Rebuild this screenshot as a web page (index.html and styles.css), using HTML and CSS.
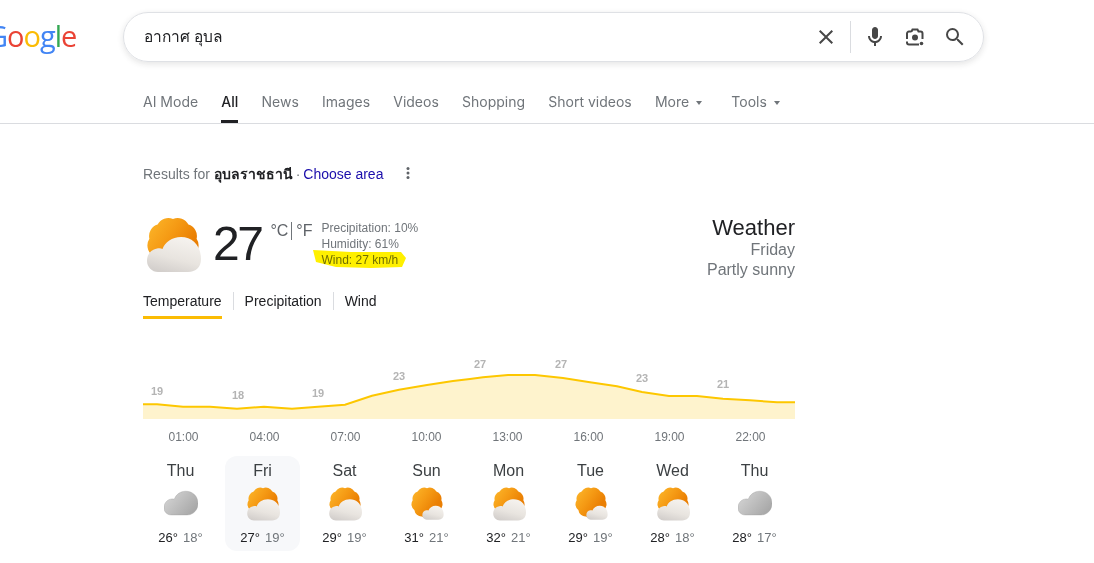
FILE: index.html
```html
<!DOCTYPE html>
<html lang="th">
<head>
    <meta charset="UTF-8">
    <meta name="viewport" content="width=device-width, initial-scale=1.0">
    <title>อากาศ อุบล - Google Search</title>
    <link rel="stylesheet" href="styles.css">
</head>
<body>
    <svg class="defs" width="0" height="0">
        <defs>
            <linearGradient id="sunFill" x1="0" y1="0" x2="1" y2="0.7">
                <stop offset="0" stop-color="#fdb92c"/>
                <stop offset="0.45" stop-color="#f59a14"/>
                <stop offset="0.8" stop-color="#ea7f03"/>
            </linearGradient>
            <linearGradient id="cloudFill" x1="0.7" y1="0" x2="0.3" y2="1">
                <stop offset="0" stop-color="#f6f3ef"/>
                <stop offset="0.6" stop-color="#e8e4df"/>
                <stop offset="1" stop-color="#d3cfcc"/>
            </linearGradient>
            <linearGradient id="greyFill" x1="0" y1="0" x2="1" y2="0.6">
                <stop offset="0" stop-color="#d9d9d9"/>
                <stop offset="1" stop-color="#a9a9a9"/>
            </linearGradient>
            <path id="sunShape" fill="url(#sunFill)" d="M28 2A12 12 0 0 1 43.400 7.600A12 12 0 0 1 51.600 21.800A12 12 0 0 1 48.800 38A12 12 0 0 1 36.200 48.600A12 12 0 0 1 19.800 48.600A12 12 0 0 1 7.200 38A12 12 0 0 1 4.400 21.800A12 12 0 0 1 12.600 7.600A12 12 0 0 1 28 2Z"/>
            <path id="cloudShape" d="M13 55H43C51 55 56 50 56 42C56 28 47 20 36 20C27 20 20 25 17.500 32C16 31 14 31 12 31.500C6 32.500 2 37 2 44C2 50 7 55 13 55Z"/>
            <symbol id="partlySunny" viewBox="0 0 56 56">
                <use href="#sunShape"/>
                <use href="#cloudShape" fill="url(#cloudFill)"/>
            </symbol>
            <symbol id="mostlySunny" viewBox="0 0 56 56">
                <use href="#sunShape"/>
                <use href="#cloudShape" fill="url(#cloudFill)" transform="translate(19 18) scale(0.65)"/>
            </symbol>
            <symbol id="cloudy" viewBox="0 0 56 56">
                <path fill="url(#greyFill)" stroke="#9c9c9c" stroke-width="0.6" d="M12 46H38C48 46 56 38 56 27C56 15 47 7 36 7C27 7 20 12 17 20C15 19.500 13 19.500 11 20C5 21 0 27 0 34C0 41 5 46 12 46Z"/>
            </symbol>
        </defs>
    </svg>

    <header class="header">
        <div class="search-row">
            <div class="logo">
                <span class="blue">G</span><span class="red">o</span><span class="yellow">o</span><span class="blue">g</span><span class="green">l</span><span class="red">e</span>
            </div>
            <div class="search-box">
                <span class="query">อากาศ อุบล</span>
                <svg class="icon clear-icon" viewBox="0 0 24 24"><path d="M19 6.410L17.590 5 12 10.590 6.410 5 5 6.410 10.590 12 5 17.590 6.410 19 12 13.410 17.590 19 19 17.590 13.410 12z"/></svg>
                <span class="divider"></span>
                <svg class="icon" viewBox="0 0 24 24"><path d="M12 14c1.660 0 3-1.340 3-3V5c0-1.660-1.340-3-3-3S9 3.340 9 5v6c0 1.660 1.340 3 3 3z"/><path d="M17 11c0 2.760-2.240 5-5 5s-5-2.240-5-5H5c0 3.530 2.610 6.430 6 6.920V21h2v-3.080c3.390-.49 6-3.390 6-6.920h-2z"/></svg>
                <svg class="icon" viewBox="0 0 24 24"><path class="lens-line" d="M8.500 6.500l1-2h5l1 2h2a2 2 0 0 1 2 2V14M4 14V8.500a2 2 0 0 1 2-2h2.500M4 16.500v1a2 2 0 0 0 2 2h10"/><circle cx="12" cy="12.500" r="3"/><circle cx="18.500" cy="18.500" r="1.800"/></svg>
                <svg class="icon" viewBox="0 0 24 24"><path d="M15.500 14h-.79l-.28-.27A6.471 6.471 0 0 0 16 9.500 6.500 6.500 0 1 0 9.500 16c1.610 0 3.090-.59 4.230-1.570l.27.28v.79l5 4.990L20.490 19l-4.990-5zm-6 0C7.010 14 5 11.990 5 9.500S7.010 5 9.500 5 14 7.010 14 9.500 11.990 14 9.500 14z"/></svg>
            </div>
        </div>
        <nav class="tabs">
            <a class="tab">AI Mode</a>
            <a class="tab active">All</a>
            <a class="tab">News</a>
            <a class="tab">Images</a>
            <a class="tab">Videos</a>
            <a class="tab">Shopping</a>
            <a class="tab">Short videos</a>
            <a class="tab">More<i class="caret"></i></a>
            <a class="tab tools">Tools<i class="caret"></i></a>
        </nav>
    </header>

    <main class="results">
        <div class="location">
            <span>Results for <b>อุบลราชธานี</b> <span class="dot">·</span> <a class="link">Choose area</a></span>
            <svg class="kebab" viewBox="0 0 4 12" width="4" height="12"><circle cx="2" cy="1.500" r="1.500"/><circle cx="2" cy="6" r="1.500"/><circle cx="2" cy="10.500" r="1.500"/></svg>
        </div>

        <section class="weather">
            <div class="now">
                <svg class="now-icon"><use href="#partlySunny"/></svg>
                <span class="temp">27</span>
                <span class="units">°C<i class="unit-sep"></i>°F</span>
                <div class="details">
                    <div>Precipitation: 10%</div>
                    <div>Humidity: 61%</div>
                    <div class="wind">Wind: 27 km/h
                        <svg class="marker" viewBox="0 0 96 19" width="96" height="19"><path d="M2 0L40 2 90 2 95 8 91 17 60 18 25 17 5 12Z"/></svg>
                    </div>
                </div>
            </div>
            <div class="summary">
                <div class="summary-title">Weather</div>
                <div>Friday</div>
                <div>Partly sunny</div>
            </div>
        </section>

        <div class="chart-tabs">
            <a class="chart-tab selected">Temperature</a>
            <a class="chart-tab">Precipitation</a>
            <a class="chart-tab">Wind</a>
        </div>

        <svg class="chart" viewBox="0 0 652 85" width="652" height="85">
            <path class="chart-area" d="M0 59.300L14 59.300 40 61.700 67 61.700 94 63.700 121 61.700 149 63.700 175 61.700 202 59.700 229 50.700 256 44.700 284 40 310 36 327 34 340 32.300 365 30 392 30 420 33 447 37.300 474 41.300 499 47 526 51 554 51 580 53.700 607 55.300 634 57.300 652 57.300V74H0Z"/>
            <path class="chart-line" d="M0 59.300L14 59.300 40 61.700 67 61.700 94 63.700 121 61.700 149 63.700 175 61.700 202 59.700 229 50.700 256 44.700 284 40 310 36 327 34 340 32.300 365 30 392 30 420 33 447 37.300 474 41.300 499 47 526 51 554 51 580 53.700 607 55.300 634 57.300 652 57.300"/>
            <g class="chart-values">
                <text x="14" y="50">19</text>
                <text x="95" y="54">18</text>
                <text x="175" y="52">19</text>
                <text x="256" y="35">23</text>
                <text x="337" y="23">27</text>
                <text x="418" y="23">27</text>
                <text x="499" y="37">23</text>
                <text x="580" y="43">21</text>
            </g>
        </svg>

        <div class="hours">
            <span>01:00</span>
            <span>04:00</span>
            <span>07:00</span>
            <span>10:00</span>
            <span>13:00</span>
            <span>16:00</span>
            <span>19:00</span>
            <span>22:00</span>
        </div>

        <div class="days">
            <div class="day">
                <div class="day-name">Thu</div>
                <svg class="day-icon"><use href="#cloudy"/></svg>
                <div class="day-temp"><span class="high">26°</span><span class="low">18°</span></div>
            </div>
            <div class="day today">
                <div class="day-name">Fri</div>
                <svg class="day-icon"><use href="#partlySunny"/></svg>
                <div class="day-temp"><span class="high">27°</span><span class="low">19°</span></div>
            </div>
            <div class="day">
                <div class="day-name">Sat</div>
                <svg class="day-icon"><use href="#partlySunny"/></svg>
                <div class="day-temp"><span class="high">29°</span><span class="low">19°</span></div>
            </div>
            <div class="day">
                <div class="day-name">Sun</div>
                <svg class="day-icon"><use href="#mostlySunny"/></svg>
                <div class="day-temp"><span class="high">31°</span><span class="low">21°</span></div>
            </div>
            <div class="day">
                <div class="day-name">Mon</div>
                <svg class="day-icon"><use href="#partlySunny"/></svg>
                <div class="day-temp"><span class="high">32°</span><span class="low">21°</span></div>
            </div>
            <div class="day">
                <div class="day-name">Tue</div>
                <svg class="day-icon"><use href="#mostlySunny"/></svg>
                <div class="day-temp"><span class="high">29°</span><span class="low">19°</span></div>
            </div>
            <div class="day">
                <div class="day-name">Wed</div>
                <svg class="day-icon"><use href="#partlySunny"/></svg>
                <div class="day-temp"><span class="high">28°</span><span class="low">18°</span></div>
            </div>
            <div class="day">
                <div class="day-name">Thu</div>
                <svg class="day-icon"><use href="#cloudy"/></svg>
                <div class="day-temp"><span class="high">28°</span><span class="low">17°</span></div>
            </div>
        </div>
    </main>
</body>
</html>
```

FILE: styles.css
```css
html, body {
    margin: 0;
    height: 100%;
    overflow: hidden;
}
body {
    font-family: "Liberation Sans", "Noto Sans", sans-serif;
    background-color: white;
    color: #202124;
}
.defs {
    display: block;
    height: 0;
}
.header {
    height: 123px;
    border-bottom: 1px solid #dadce0;
}
.search-row {
    display: flex;
    padding-top: 12px;
}
.logo {
    width: 137px;
    margin-left: -13px;
    margin-right: -1px;
    box-sizing: border-box;
    padding-top: 4px;
    font-family: "Open Sans", sans-serif;
    font-size: 29px;
    font-weight: 500;
    line-height: 40px;
    letter-spacing: -1px;
}
.blue { color: #4285f4; }
.red { color: #ea4335; }
.yellow { color: #fbbc05; }
.green { color: #34a853; }
.search-box {
    display: flex;
    align-items: center;
    box-sizing: border-box;
    width: 861px;
    height: 50px;
    padding: 0 16px 0 20px;
    border: 1px solid #dfe1e5;
    border-radius: 25px;
    box-shadow: 0 2px 6px rgba(32,33,36,0.12);
}
.query {
    flex: 1;
    padding-bottom: 2px;
    font-size: 15.500px;
}
.icon {
    width: 24px;
    height: 24px;
    margin-left: 16px;
    fill: #474747;
}
.clear-icon {
    margin-left: 0;
}
.divider {
    width: 1px;
    height: 32px;
    margin-left: 12px;
    margin-right: -4px;
    background-color: #dadce0;
}
.lens-line {
    fill: none;
    stroke: #474747;
    stroke-width: 2;
}
.tabs {
    display: flex;
    gap: 23.200px;
    padding-left: 143px;
    margin-top: 18px;
    font-family: Inter, sans-serif;
    font-size: 14px;
}
.tab {
    height: 43px;
    box-sizing: border-box;
    padding-top: 13px;
    color: #70757a;
}
.tab.active {
    color: #202124;
    font-weight: 500;
    border-bottom: 3px solid #202124;
}
.tools {
    margin-left: 6px;
}
.caret {
    display: inline-block;
    margin-left: 7px;
    vertical-align: middle;
    border-top: 4px solid #70757a;
    border-left: 3.500px solid transparent;
    border-right: 3.500px solid transparent;
}
.results {
    width: 652px;
    margin-left: 143px;
}
.location {
    display: flex;
    align-items: center;
    gap: 23px;
    height: 22px;
    margin-top: 39px;
    font-size: 14px;
    color: #70757a;
}
.location b {
    color: #202124;
}
.dot {
    margin: 0 -1px;
}
.link {
    color: #1a0dab;
}
.kebab {
    fill: #5f6368;
    margin-top: -2px;
}
.weather {
    display: flex;
    justify-content: space-between;
    margin-top: 31px;
}
.now {
    display: flex;
    align-items: flex-start;
}
.now-icon {
    width: 56px;
    height: 56px;
    margin: 1px 0 0 2px;
}
.temp {
    margin-left: 12px;
    font-size: 48px;
    line-height: 56px;
    letter-spacing: -2.500px;
}
.units {
    display: flex;
    align-items: center;
    margin: 4px 0 0 9px;
    height: 22px;
    font-size: 16px;
    color: #5f6368;
}
.unit-sep {
    width: 1px;
    height: 18px;
    margin: 0 4px 0 3px;
    background-color: #70757a;
}
.details {
    margin: 4px 0 0 9px;
    font-size: 12px;
    line-height: 16px;
    color: #70757a;
}
.wind {
    position: relative;
}
.marker {
    position: absolute;
    left: -11px;
    top: -2px;
    fill: #fff000;
    mix-blend-mode: multiply;
}
.summary {
    text-align: right;
    font-size: 16px;
    line-height: 20px;
    color: #70757a;
}
.summary-title {
    font-size: 22px;
    line-height: 24px;
    color: #202124;
}
.chart-tabs {
    display: flex;
    margin-top: 12px;
    font-size: 14px;
}
.chart-tab {
    position: relative;
    padding: 0 11px;
    height: 18px;
    line-height: 18px;
    border-right: 1px solid #dadce0;
}
.chart-tab:first-child {
    padding-left: 0;
}
.chart-tab:last-child {
    border-right: none;
}
.chart-tab.selected::after {
    content: "";
    position: absolute;
    left: 0;
    right: 11px;
    bottom: -9px;
    height: 3px;
    background-color: #fbbc04;
}
.chart {
    display: block;
    margin-top: 35px;
}
.chart-area {
    fill: #fef3cd;
}
.chart-line {
    fill: none;
    stroke: #fdc700;
    stroke-width: 2;
}
.chart-values text {
    font-size: 11px;
    font-weight: bold;
    fill: #b4b4b4;
    text-anchor: middle;
}
.hours {
    display: grid;
    grid-template-columns: repeat(8, 81px);
    text-align: center;
    font-size: 12px;
    line-height: 14px;
    color: #70757a;
}
.days {
    display: flex;
    gap: 7px;
    margin-top: 12px;
}
.day {
    display: flex;
    flex-direction: column;
    align-items: center;
    width: 75px;
    height: 95px;
    border-radius: 12px;
}
.today {
    background-color: #f7f8fa;
}
.day-name {
    margin-top: 6px;
    font-size: 16px;
    line-height: 18px;
    color: #3c4043;
}
.day-icon {
    width: 34px;
    height: 34px;
    margin-top: 7px;
}
.day-temp {
    display: flex;
    gap: 5px;
    margin-top: 8px;
    font-size: 13px;
    line-height: 18px;
}
.low {
    color: #70757a;
}
```
